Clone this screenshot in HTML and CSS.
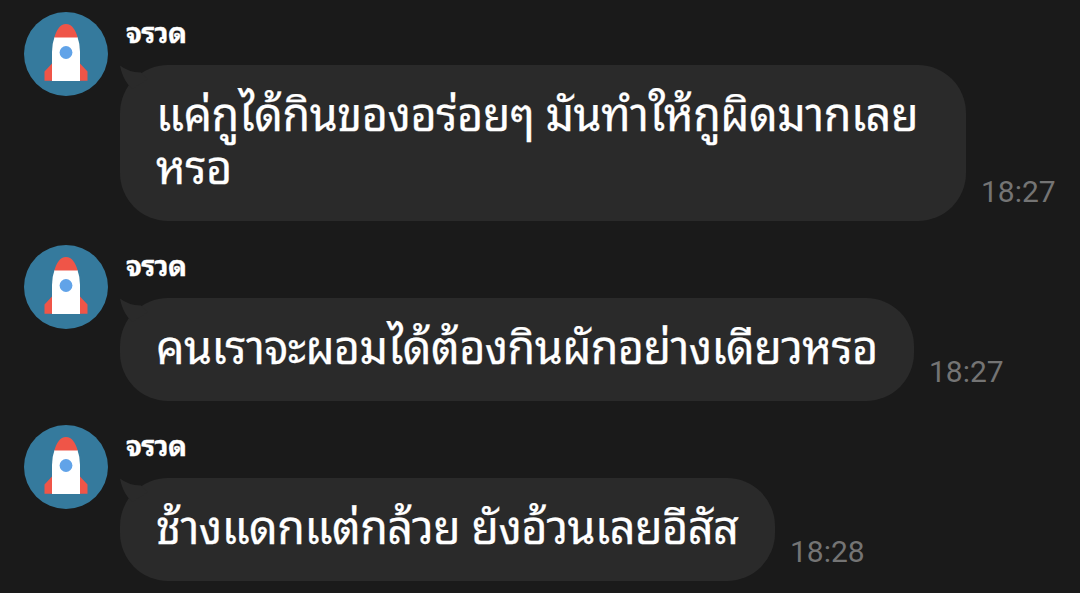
FILE: index.html
```html
<!DOCTYPE html>
<html lang="th">
<head>
<meta charset="utf-8">
<title>Chat</title>
<link rel="stylesheet" href="styles.css">
</head>
<body>
<svg class="defs" aria-hidden="true">
  <symbol id="rocket" viewBox="0 0 84 84">
    <circle cx="42" cy="42" r="42" fill="#357a9d"/>
    <path d="M28.5 51 L20.5 59.5 V68.800 H29Z M55.500 51 L63.500 59.500 V68.800 H55Z" fill="#ef5548"/>
    <path d="M28 69 V40 Q28 32 30.500 25 H53.500 Q56 32 56 40 V69Z" fill="#fff"/>
    <path d="M30.300 25.500 C32.500 18 36 12 42 12 C48 12 51.500 18 53.700 25.500Z" fill="#ef5548"/>
    <circle cx="42" cy="40.500" r="6.400" fill="#61a3e8"/>
  </symbol>
  <symbol id="tail" viewBox="0 0 28 24">
    <path d="M0 0.500 Q8 7 21 7.600 L28 14 L12 24 L8.500 20 Q2 12 0 0.500Z" fill="#2a2a2a"/>
  </symbol>
</svg>
<main class="chat">
  <article class="message">
    <svg class="avatar"><use href="#rocket"/></svg>
    <div class="content">
      <div class="name">จรวด</div>
      <div class="row">
        <div class="bubble bubble-long"><svg class="tail"><use href="#tail"/></svg><span class="text text-a">แค่กูได้กินของอร่อยๆ มันทำให้กูผิดมากเลย หรอ</span></div>
        <time class="time">18:27</time>
      </div>
    </div>
  </article>
  <article class="message">
    <svg class="avatar"><use href="#rocket"/></svg>
    <div class="content">
      <div class="name">จรวด</div>
      <div class="row">
        <div class="bubble bubble-medium"><svg class="tail"><use href="#tail"/></svg><span class="text text-b">คนเราจะผอมได้ต้องกินผักอย่างเดียวหรอ</span></div>
        <time class="time">18:27</time>
      </div>
    </div>
  </article>
  <article class="message">
    <svg class="avatar"><use href="#rocket"/></svg>
    <div class="content">
      <div class="name">จรวด</div>
      <div class="row">
        <div class="bubble bubble-short"><svg class="tail"><use href="#tail"/></svg><span class="text text-c">ช้างแดกแต่กล้วย ยังอ้วนเลยอีสัส</span></div>
        <time class="time">18:28</time>
      </div>
    </div>
  </article>
</main>
</body>
</html>
```
FILE: styles.css
```css
* { box-sizing: border-box; }
body { margin: 0; background: #1a1a1a; color: #fff; font-family: "Noto Sans Thai Looped", "Noto Looped Thai", "Droid Sans Thai", Loma, Waree, Garuda, Umpush, "Leelawadee UI", Tahoma, "Noto Sans Thai", Roboto, sans-serif; overflow: hidden; }
.defs { position: absolute; width: 0; height: 0; }
.chat { display: flex; flex-direction: column; gap: 24px; padding: 12px 24px 0; }
.message { display: flex; gap: 12px; align-items: flex-start; }
.avatar { width: 84px; height: 84px; flex: none; }
.name { height: 53px; padding: 0 0 0 6px; font-size: 28px; line-height: 37px; font-weight: 700; letter-spacing: -0.7px; -webkit-text-stroke: 0.3px #fff; }
.row { display: flex; align-items: flex-end; gap: 15px; }
.bubble { position: relative; background: #2a2a2a; border-radius: 48px; padding: 20px 0 0 36px; height: 103px; font-size: 45px; line-height: 53px; white-space: nowrap; }
.bubble-long { width: 846px; height: 156px; }
.bubble-medium { width: 794px; }
.bubble-short { width: 655px; }
.tail { position: absolute; left: 0; top: 0; width: 28px; height: 24px; }
.text { display: block; -webkit-text-stroke: 0.25px #fff; }
.text-a { width: 780px; white-space: normal; letter-spacing: -0.5px; }
.text-b { letter-spacing: -0.6px; }
.text-c { letter-spacing: -0.55px; }
.time { color: #747474; font: 30px/36px Roboto, sans-serif; padding-bottom: 11px; }
```
